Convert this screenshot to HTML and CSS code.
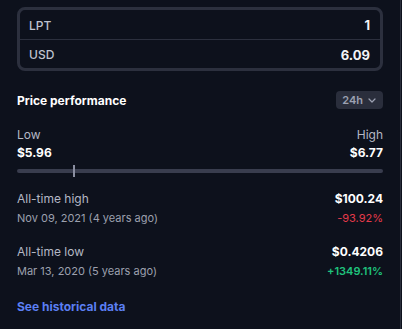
FILE: index.html
```html
<!DOCTYPE html>
<html>
<head>
<meta charset="utf-8">
<link rel="stylesheet" href="styles.css">
</head>
<body>
<div class="panel">
  <div class="converter">
    <div class="conv-row">
      <span class="conv-label">LPT</span>
      <span class="conv-value">1</span>
    </div>
    <div class="conv-row">
      <span class="conv-label">USD</span>
      <span class="conv-value">6.09</span>
    </div>
  </div>

  <div class="perf-head">
    <span class="perf-title">Price performance</span>
    <span class="chip">24h
      <svg class="chev" width="8" height="5" viewBox="0 0 8 5"><path d="M1 1l3 3 3-3" fill="none" stroke="currentColor" stroke-width="1.2" stroke-linecap="round" stroke-linejoin="round"/></svg>
    </span>
  </div>

  <div class="range">
    <div class="range-col">
      <span class="muted">Low</span>
      <span class="strong">$5.96</span>
    </div>
    <div class="range-col right">
      <span class="muted">High</span>
      <span class="strong">$6.77</span>
    </div>
  </div>
  <div class="track">
    <span class="marker" style="left: 15.3%"></span>
  </div>

  <div class="ath">
    <div class="ath-row">
      <span class="muted">All-time high</span>
      <span class="strong">$100.24</span>
    </div>
    <div class="ath-row sub">
      <span class="date">Nov 09, 2021 (4 years ago)</span>
      <span class="neg">-93.92%</span>
    </div>
  </div>

  <div class="ath">
    <div class="ath-row">
      <span class="muted">All-time low</span>
      <span class="strong">$0.4206</span>
    </div>
    <div class="ath-row sub">
      <span class="date">Mar 13, 2020 (5 years ago)</span>
      <span class="pos">+1349.11%</span>
    </div>
  </div>

  <a class="link" href="#">See historical data</a>
</div>
</body>
</html>
```

FILE: styles.css
```css
html, body {
  margin: 0;
  padding: 0;
  background: #0d111c;
}
body {
  font-family: Inter, "Noto Sans", sans-serif;
  width: 402px;
  height: 329px;
  overflow: hidden;
}
.panel {
  box-sizing: border-box;
  width: 401px;
  height: 329px;
  border-right: 1px solid #2b2f3c;
  padding: 7px 17px 0 17px;
}
.converter {
  border: 3px solid #2c303e;
  border-radius: 8px;
}
.conv-row {
  display: flex;
  justify-content: space-between;
  align-items: center;
  height: 29px;
  padding: 1px 10px 0 9px;
  box-sizing: border-box;
}
.conv-row + .conv-row {
  border-top: 1px solid #2c303e;
  height: 29px;
}
.conv-label {
  color: #bfc3cf;
  font-size: 12px;
  font-weight: 500;
}
.conv-value {
  color: #f2f3f6;
  font-size: 13px;
  font-weight: 700;
}
.perf-head {
  display: flex;
  justify-content: space-between;
  align-items: center;
  margin-top: 20px;
}
.perf-title {
  color: #ffffff;
  font-size: 12px;
  font-weight: 700;
}
.chip {
  display: flex;
  align-items: center;
  gap: 5px;
  background: #2a2e3c;
  color: #9ca1b2;
  font-size: 11px;
  font-weight: 600;
  height: 18px;
  padding: 0 7px 0 6px;
  border-radius: 4px;
}
.chev {
  display: block;
}
.range {
  display: flex;
  justify-content: space-between;
  margin-top: 17px;
}
.range-col {
  display: flex;
  flex-direction: column;
  gap: 1px;
}
.range-col.right {
  align-items: flex-end;
}
.muted {
  color: #b4b8c5;
  font-size: 12px;
  line-height: 17px;
}
.strong {
  color: #ffffff;
  font-size: 12px;
  font-weight: 700;
  line-height: 17px;
}
.track {
  position: relative;
  height: 4px;
  background: #393d4e;
  border-radius: 2px;
  margin-top: 8px;
}
.marker {
  position: absolute;
  top: -4px;
  width: 2px;
  height: 12px;
  background: #8a8ea0;
}
.ath {
  margin-top: 17px;
}
.ath + .ath {
  margin-top: 16px;
}
.ath-row {
  display: flex;
  justify-content: space-between;
  align-items: center;
  line-height: 18px;
}
.ath-row.sub {
  margin-top: 2px;
}
.date {
  color: #9ca0ae;
  font-size: 11px;
}
.neg {
  color: #e53a4a;
  font-size: 11px;
}
.pos {
  color: #1fc27c;
  font-size: 11px;
  font-weight: 600;
}
.link {
  display: block;
  margin-top: 19px;
  color: #5b7ff3;
  font-size: 12px;
  font-weight: 700;
  text-decoration: none;
}
```
